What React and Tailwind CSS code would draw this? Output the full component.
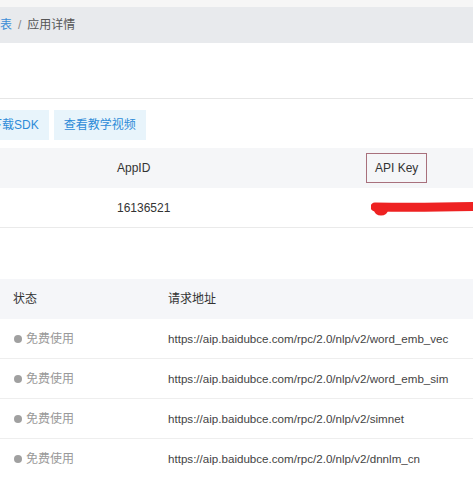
const URLS = [
  "https://aip.baidubce.com/rpc/2.0/nlp/v2/word_emb_vec",
  "https://aip.baidubce.com/rpc/2.0/nlp/v2/word_emb_sim",
  "https://aip.baidubce.com/rpc/2.0/nlp/v2/simnet",
  "https://aip.baidubce.com/rpc/2.0/nlp/v2/dnnlm_cn",
];

function Scribble() {
  // red marker stroke hiding the key
  return (
    <svg className="absolute left-[371px] top-[13px]" width="102" height="16" viewBox="0 0 102 16" fill="none">
      <path d="M4 6 C 30 6.5, 60 6.5, 102 5.5" stroke="#ee2222" strokeWidth="9" strokeLinecap="round" />
      <ellipse cx="10" cy="9" rx="7" ry="5.5" fill="#ee2222" />
    </svg>
  );
}

export default function App() {
  return (
    <div className="w-[473px] h-[477px] overflow-hidden bg-white text-[12px] text-[#333] font-['Liberation_Sans','Noto_Sans_CJK_SC',sans-serif]">
      <div className="h-[7px] bg-[#f6f6f6]" />
      <div className="h-[36px] bg-[#e8eaed] flex items-center text-[#555] whitespace-nowrap">
        <span className="-ml-[36px] text-[#3c8dd7]">应用列表</span>
        <span className="mx-[6px] text-[#888]">/</span>
        <span>应用详情</span>
      </div>
      <div className="h-[55px]" />
      <div className="h-px bg-[#e6e6e6]" />

      <div className="pt-[11px] flex gap-[5px] -ml-[20px] whitespace-nowrap">
        <button className="h-[30px] px-[10px] bg-[#e8f4fb] text-[#2d8bd8]">下载SDK</button>
        <button className="h-[30px] px-[10px] bg-[#e8f4fb] text-[#2d8bd8]">查看教学视频</button>
      </div>

      <div className="mt-[8px]">
        <div className="h-[40px] bg-[#f5f6f8] grid grid-cols-[117px_249px_1fr] items-center">
          <div />
          <div>AppID</div>
          <div>
            <span className="inline-flex h-[30px] items-center px-[8px] border border-[#a8707c]">API Key</span>
          </div>
        </div>
        <div className="relative h-[40px] border-b border-[#eaeaea] grid grid-cols-[117px_249px_1fr] items-center">
          <div />
          <div>16136521</div>
          <div />
          <Scribble />
        </div>
      </div>

      <div className="mt-[51px]">
        <div className="h-[40px] bg-[#f5f6f9] grid grid-cols-[168px_1fr] items-center">
          <div className="pl-[13px]">状态</div>
          <div>请求地址</div>
        </div>
        {URLS.map((url) => (
          <div key={url} className="h-[40px] border-b border-[#eeeeee] grid grid-cols-[168px_1fr] items-center whitespace-nowrap">
            <div className="pl-[14px] flex items-center gap-[4px] text-[#999]">
              <span className="w-[8px] h-[8px] rounded-full bg-[#a0a0a0]" />
              <span>免费使用</span>
            </div>
            <div className="text-[11.6px] text-[#444]">{url}</div>
          </div>
        ))}
      </div>
    </div>
  );
}
